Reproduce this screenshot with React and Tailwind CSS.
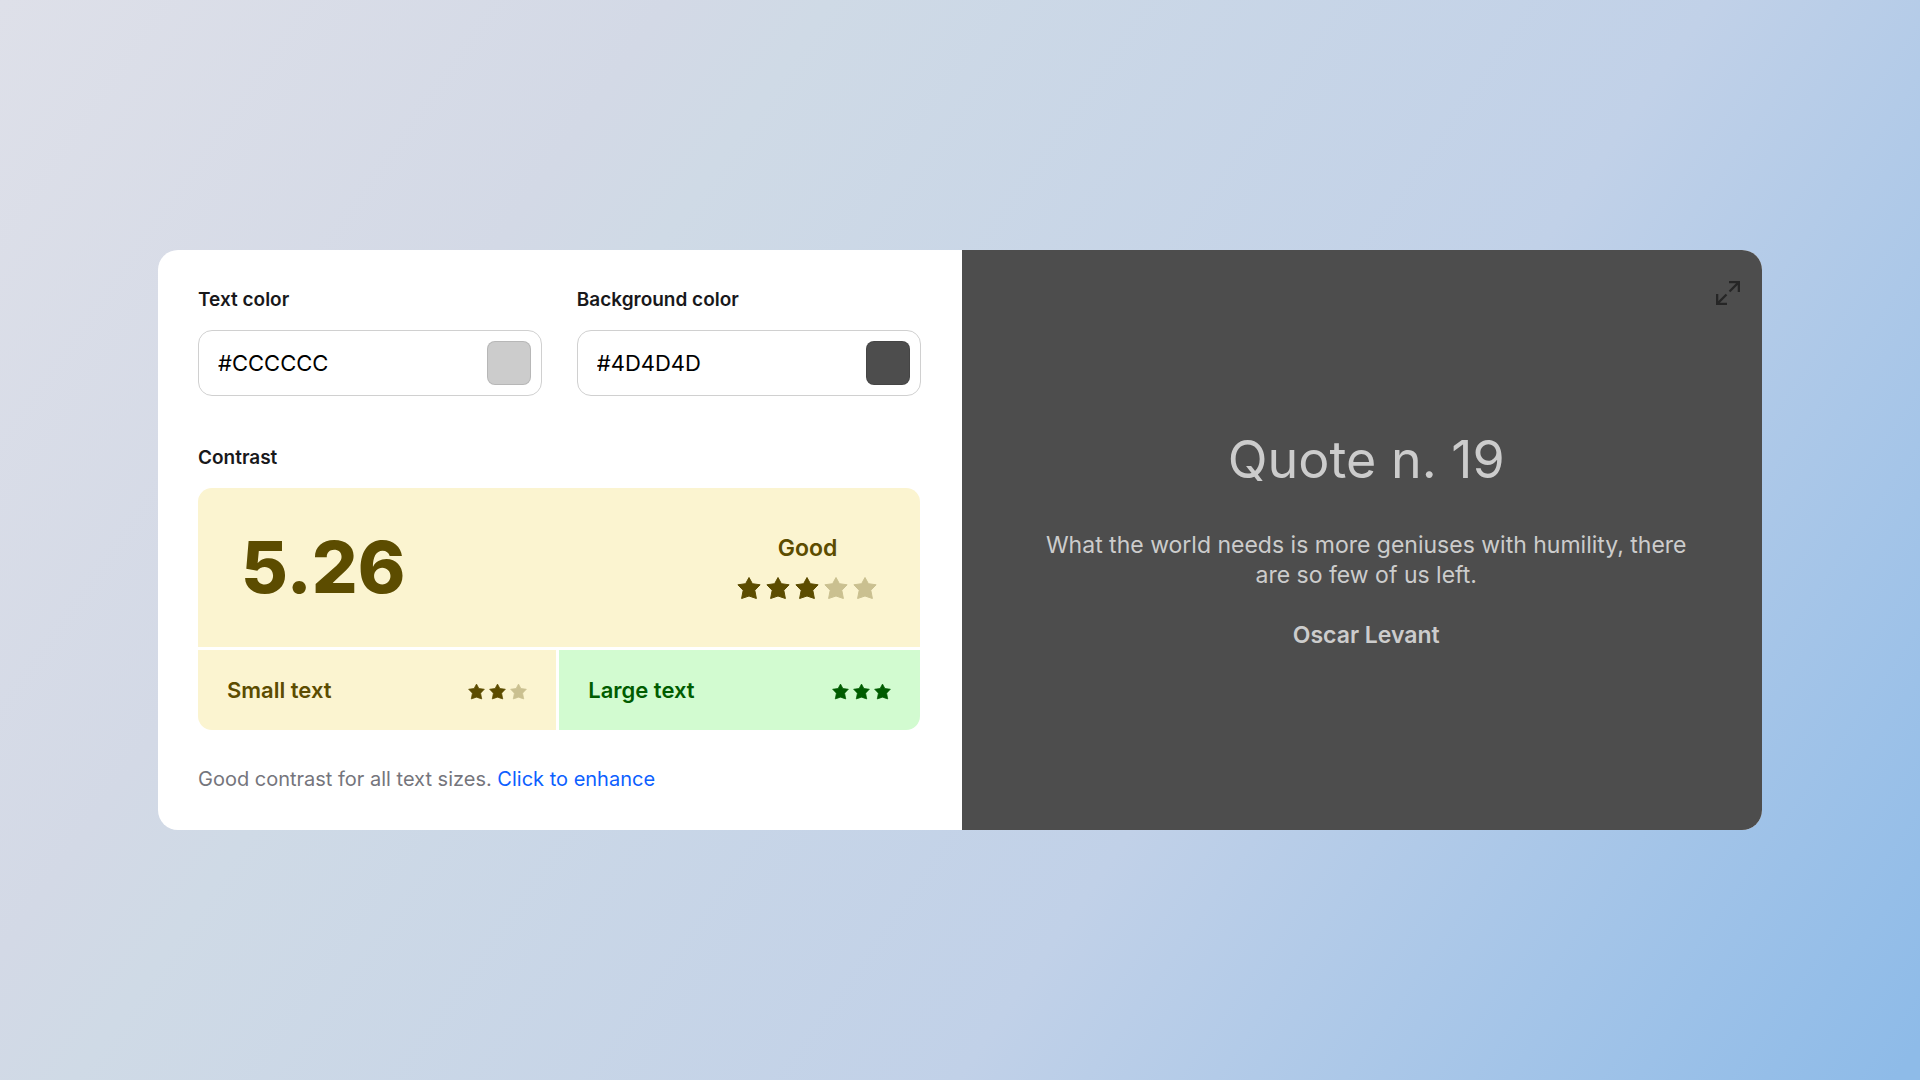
import { useState } from "react";

const Stars = ({ total, filled, size }) => {
    const sizeClass = size === "large" ? "w-6 h-6" : "w-[17px] h-[17px]";
    const gapClass = size === "large" ? "gap-[5px]" : "gap-1 pt-[3px]";

    return (
        <div className={`flex items-center ${gapClass}`} role="img" aria-label={`${filled} out of ${total}`}>
            {Array.from({ length: total }, (_, index) => (
                <svg
                    key={index}
                    viewBox="0 0 24 24"
                    fill="currentColor"
                    stroke="currentColor"
                    strokeWidth="1"
                    strokeLinejoin="round"
                    className={`${sizeClass} ${index < filled ? "" : "opacity-30"}`}
                >
                    <path d="M12 1.500L15.400 7.700l7.700 1.100-5.300 5.500 1.600 8.200L12 20l-7.400 2.500 1.600-8.200L.9 8.800l7.700-1.100z" />
                </svg>
            ))}
        </div>
    );
};

const ColorField = ({ id, label, value, onChange }) => (
    <div className="flex-1 min-w-0">
        <label htmlFor={id} className="block text-[19px] leading-6 font-semibold text-[#18181b]">
            {label}
        </label>
        <div className="mt-[18px] flex items-center h-[66px] pl-[19px] pr-[10px] rounded-[14px] border border-[#d0d0d0] bg-white">
            <input
                id={id}
                type="text"
                value={value}
                onChange={(e) => onChange(e.target.value)}
                className="flex-1 min-w-0 text-[22px] leading-7 text-black outline-none"
            />
            <button
                type="button"
                aria-label={`Pick ${label.toLowerCase()}`}
                className="w-11 h-11 rounded-lg border border-black/10 shrink-0"
                style={{ backgroundColor: value }}
            />
        </div>
    </div>
);

export default function App() {
    const [textColor, setTextColor] = useState("#CCCCCC");
    const [bgColor, setBgColor] = useState("#4D4D4D");

    return (
        <main className="min-h-screen flex items-center justify-center px-[158px] font-[Inter,sans-serif] bg-[linear-gradient(125deg,#dee0e9_0%,#d3d9e6_25%,#cfdae6_31%,#c1d1e8_64%,#8ebbe8_99%)]">
            <div className="grid grid-cols-[805fr_800fr] w-full rounded-[20px] overflow-hidden bg-white">
                {/* Controls */}
                <section className="min-w-0 pl-10 pr-[42px] pt-[38px] pb-[37px]">
                    <div className="flex gap-[35px]">
                        <ColorField id="text-color" label="Text color" value={textColor} onChange={setTextColor} />
                        <ColorField id="bg-color" label="Background color" value={bgColor} onChange={setBgColor} />
                    </div>

                    <h2 className="mt-[50px] text-[19px] leading-6 font-semibold text-[#18181b]">Contrast</h2>

                    {/* Score */}
                    <div className="mt-[18px] flex flex-col gap-[3px] rounded-[14px] overflow-hidden text-[#5c4c00]">
                        <div className="flex items-center justify-between h-[159px] px-[43px] pb-[2px] bg-[#fbf4d0]">
                            <span className="text-[72px] leading-none font-extrabold">5.26</span>
                            <div className="flex flex-col items-center gap-[14px]">
                                <span className="text-[23px] leading-7 font-semibold">Good</span>
                                <Stars total={5} filled={3} size="large" />
                            </div>
                        </div>
                        <div className="grid grid-cols-[358fr_361fr] gap-[3px]">
                            <div className="flex items-center justify-between h-20 px-[29px] bg-[#fbf4d0]">
                                <span className="text-[22px] leading-7 font-semibold">Small text</span>
                                <Stars total={3} filled={2} size="small" />
                            </div>
                            <div className="flex items-center justify-between h-20 px-[29px] bg-[#d2fbd0] text-[#005c00]">
                                <span className="text-[22px] leading-7 font-semibold">Large text</span>
                                <Stars total={3} filled={3} size="small" />
                            </div>
                        </div>
                    </div>

                    <p className="mt-[35px] text-[20px] leading-7 text-[#75757c]">
                        Good contrast for all text sizes.{" "}
                        <a href="#enhance" className="text-[#0d5fff]">Click to enhance</a>
                    </p>
                </section>

                {/* Preview */}
                <section
                    className="relative min-w-0 flex flex-col items-center justify-center pl-[68px] pr-[60px] pb-[2px] text-center"
                    style={{ backgroundColor: bgColor, color: textColor }}
                >
                    <button type="button" aria-label="Expand preview" className="absolute top-[30px] right-[21px] text-black/50">
                        <svg viewBox="0 0 26 26" className="w-[26px] h-[26px]" fill="none" stroke="currentColor" strokeWidth="2.300">
                            <path d="M14 2.150h9.850V12M23.850 2.150l-9.350 9.350M12 23.850H2.150V14M2.150 23.850l9.350-9.350" />
                        </svg>
                    </button>
                    <h1 className="text-[52px] leading-[64px]">Quote n. 19</h1>
                    <p className="mt-[38px] text-[23px] leading-[30px]">
                        What the world needs is more geniuses with humility, there are so few of us left.
                    </p>
                    <p className="mt-[30px] text-[23px] leading-[30px] font-semibold">Oscar Levant</p>
                </section>
            </div>
        </main>
    );
}
